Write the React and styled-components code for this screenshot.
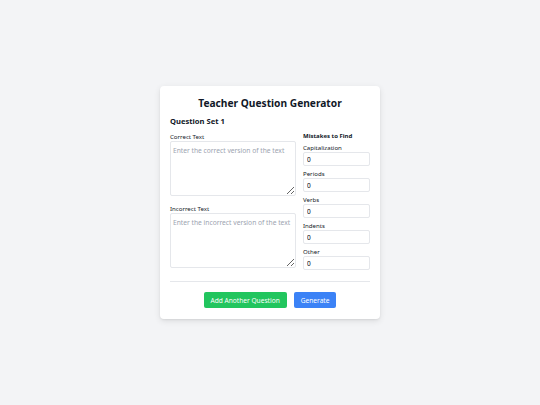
import React from 'react';
import styled, { createGlobalStyle } from 'styled-components';

const GlobalStyle = createGlobalStyle`
  html, body {
    margin: 0;
    padding: 0;
    background: #f3f4f6;
    font-family: 'Noto Sans', 'Open Sans', sans-serif;
    color: #111827;
  }
  * { box-sizing: border-box; }
`;

const Page = styled.div`
  width: 540px;
  height: 405px;
  display: flex;
  justify-content: center;
  padding-top: 86px;
`;

const Card = styled.div`
  width: 220px;
  height: 233px;
  background: #ffffff;
  border-radius: 4px;
  box-shadow: 0 2px 6px rgba(0, 0, 0, 0.1), 0 1px 2px rgba(0, 0, 0, 0.06);
  padding: 8px 10px 10px;
`;

const Title = styled.h1`
  margin: 0;
  text-align: center;
  font-size: 10.2px;
  line-height: 18px;
  font-weight: 700;
`;

const SetTitle = styled.h2`
  margin: 2px 0 0;
  font-size: 7.6px;
  line-height: 14px;
  font-weight: 700;
`;

const Grid = styled.div`
  display: grid;
  grid-template-columns: 126px 67px;
  column-gap: 7px;
  margin-top: 2px;
`;

const Column = styled.div`
  display: flex;
  flex-direction: column;
`;

const Label = styled.label`
  display: block;
  font-size: 6.1px;
  line-height: 9px;
  padding-top: 2px;
  color: #111827;
  margin-top: ${p => p.$top || 0}px;
`;

const Heading = styled.div`
  font-size: 6px;
  line-height: 9px;
  padding-top: 2px;
  font-weight: 700;
  color: #111827;
  margin-bottom: 1px;
`;

const TextArea = styled.textarea`
  display: block;
  width: 126px;
  height: 55px;
  border: 1px solid #e5e7eb;
  border-radius: 2px;
  padding: 4px 2px;
  font-family: 'Noto Sans', 'Open Sans', sans-serif;
  font-size: 6.7px;
  line-height: 10px;
  resize: vertical;
  &::placeholder {
    color: #9ca3af;
  }
`;

const Field = styled.div`
  & + & {
    margin-top: 2px;
  }
`;

const FieldLabel = styled.label`
  display: block;
  font-size: 6.1px;
  line-height: 9px;
  padding-top: 1px;
  color: #111827;
`;

const NumberInput = styled.input`
  display: block;
  width: 67px;
  height: 14px;
  border: 1px solid #e5e7eb;
  border-radius: 2px;
  padding: 0 3px;
  font-family: 'Noto Sans', 'Open Sans', sans-serif;
  font-size: 6.5px;
  color: #000000;
  appearance: textfield;
  &::-webkit-inner-spin-button,
  &::-webkit-outer-spin-button {
    -webkit-appearance: none;
    margin: 0;
  }
`;

const Divider = styled.hr`
  border: none;
  border-top: 1px solid #e5e7eb;
  margin: 11px 0 0;
`;

const Actions = styled.div`
  display: flex;
  justify-content: center;
  gap: 7px;
  margin-top: 10px;
`;

const Button = styled.button`
  height: 16px;
  padding: 0 7px;
  border: none;
  border-radius: 2px;
  background: ${p => p.$bg};
  color: #ffffff;
  font-family: 'Noto Sans', 'Open Sans', sans-serif;
  font-size: 6.6px;
  cursor: pointer;
`;

const mistakes = ['Capitalization', 'Periods', 'Verbs', 'Indents', 'Other'];

const App = () => {
  return (
    <Page>
      <GlobalStyle />
      <Card>
        <Title>Teacher Question Generator</Title>
        <SetTitle>Question Set 1</SetTitle>
        <Grid>
          <Column>
            <Label>Correct Text</Label>
            <TextArea placeholder="Enter the correct version of the text" />
            <Label $top={6}>Incorrect Text</Label>
            <TextArea placeholder="Enter the incorrect version of the text" />
          </Column>
          <Column>
            <Heading>Mistakes to Find</Heading>
            {mistakes.map(m => (
              <Field key={m}>
                <FieldLabel>{m}</FieldLabel>
                <NumberInput type="number" defaultValue={0} />
              </Field>
            ))}
          </Column>
        </Grid>
        <Divider />
        <Actions>
          <Button $bg="#22c55e">Add Another Question</Button>
          <Button $bg="#3b82f6">Generate</Button>
        </Actions>
      </Card>
    </Page>
  );
};

export default App;
